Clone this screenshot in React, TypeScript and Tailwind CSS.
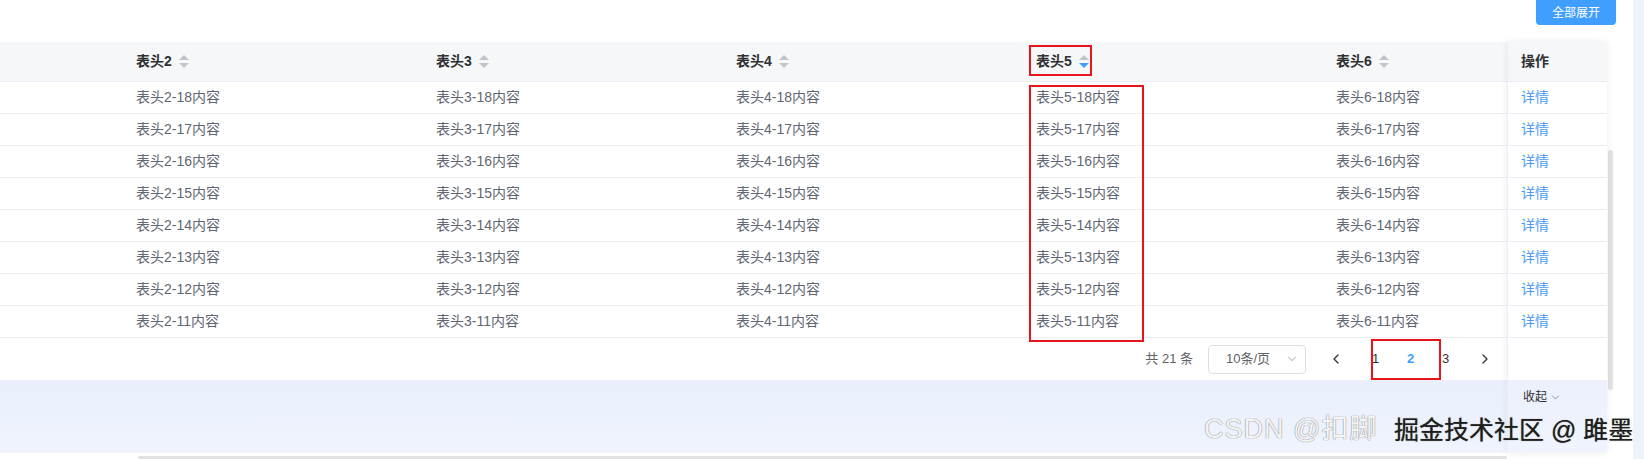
import React from 'react';

const columns = ['表头2', '表头3', '表头4', '表头5', '表头6'];
const rows = [18, 17, 16, 15, 14, 13, 12, 11];

function SortCaret({ active }: { active?: boolean }) {
  return (
    <span className="ml-[7px] inline-flex flex-col items-center gap-[3px]">
      <span className="h-0 w-0 border-x-[5px] border-b-[5px] border-x-transparent border-b-[#c0c4cc]" />
      <span
        className={`h-0 w-0 border-x-[5px] border-t-[5px] border-x-transparent ${
          active ? 'border-t-[#409eff]' : 'border-t-[#c0c4cc]'
        }`}
      />
    </span>
  );
}

function Chevron({ dir, className }: { dir: 'left' | 'right' | 'down'; className?: string }) {
  const d = dir === 'left' ? 'M7 2 L3 6 L7 10' : dir === 'right' ? 'M4 2 L8 6 L4 10' : 'M2 4 L6 8 L10 4';
  return (
    <svg viewBox="0 0 12 12" className={className} fill="none" stroke="currentColor" strokeWidth="1.3">
      <path d={d} strokeLinecap="round" strokeLinejoin="round" />
    </svg>
  );
}

export default function App() {
  return (
    <div className="relative flex h-[459px] w-[1644px] overflow-hidden bg-[#eef3fb] font-['Liberation_Sans','Noto_Sans_CJK_SC',sans-serif]">
      <div className="flex w-[1633px] flex-col bg-white">
        {/* top toolbar */}
        <div className="flex h-[42px] justify-end pr-[17px]">
          <button className="h-[25px] w-[80px] rounded-b-[4px] bg-[#409eff] text-[12px] text-white">全部展开</button>
        </div>

        {/* table body */}
        <div className="flex">
          <div className="flex w-[1507px] flex-col">
            <div className="grid h-[40px] grid-cols-[124px_300px_300px_300px_300px_183px] items-center border-b border-[#ebeef5] bg-[#f6f7f8]">
              <div />
              {columns.map((c) => (
                <div key={c} className="flex items-center px-3 text-[14px] font-bold text-[#303133]">
                  {c}
                  <SortCaret active={c === '表头5'} />
                </div>
              ))}
            </div>
            {rows.map((r) => (
              <div
                key={r}
                className="grid h-[32px] grid-cols-[124px_300px_300px_300px_300px_183px] items-center border-b border-[#ebeef5] text-[14px] text-[#5f6774]"
              >
                <div />
                {columns.map((c) => (
                  <div key={c} className="truncate px-3">
                    {c}-{r}内容
                  </div>
                ))}
              </div>
            ))}

            {/* pagination */}
            <div className="flex h-[42px] items-center justify-end pr-[6px] text-[13px] text-[#606266]">
              <span className="mr-[15px]">共 21 条</span>
              <div className="flex h-[29px] w-[98px] items-center justify-between rounded-[4px] border border-[#dcdfe6] pl-[17px] pr-[8px]">
                <span>10条/页</span>
                <Chevron dir="down" className="h-[10px] w-[10px] text-[#c0c4cc]" />
              </div>
              <button className="ml-[15px] flex h-[28px] w-[32px] items-center justify-center text-[#303133]">
                <Chevron dir="left" className="h-[12px] w-[12px]" />
              </button>
              <div className="ml-[5px] flex text-[13px]">
                <span className="flex h-[28px] w-[35px] items-center justify-center text-[#303133]">1</span>
                <span className="flex h-[28px] w-[35px] items-center justify-center font-bold text-[#409eff]">2</span>
                <span className="flex h-[28px] w-[35px] items-center justify-center text-[#303133]">3</span>
              </div>
              <button className="ml-[6px] flex h-[28px] w-[32px] items-center justify-center text-[#303133]">
                <Chevron dir="right" className="h-[12px] w-[12px]" />
              </button>
            </div>

            <div className="h-[73px] bg-gradient-to-b from-[#e9effc] to-[#eff4fd]" />
          </div>

          {/* fixed right column */}
          <div className="relative z-10 flex w-[100px] flex-col border-l border-[#ebeef5] bg-white shadow-[0_0_8px_rgba(0,0,0,0.07)]">
            <div className="flex h-[40px] items-center border-b border-[#ebeef5] bg-[#f6f7f8] pl-[13px] text-[14px] font-bold text-[#303133]">
              操作
            </div>
            {rows.map((r) => (
              <div key={r} className="flex h-[32px] items-center border-b border-[#ebeef5] pl-[13px] text-[14px] text-[#4f9bf3]">
                详情
              </div>
            ))}
            <div className="h-[42px]" />
            <div className="flex h-[73px] items-start bg-gradient-to-b from-[#ebf0fc] to-[#f0f4fd] pl-[15px] pt-[8px] text-[12px] text-[#303133]">
              <span className="flex items-center gap-[4px]">
                收起
                <Chevron dir="down" className="h-[9px] w-[9px] text-[#909399]" />
              </span>
            </div>
          </div>

          {/* vertical scrollbar */}
          <div className="w-[26px] bg-white">
            <div className="ml-[1px] mt-[108px] h-[240px] w-[5px] rounded-full bg-[#e3e3e3]" />
          </div>
        </div>

        {/* horizontal scrollbar */}
        <div className="h-[6px] bg-white pt-[3px]">
          <div className="ml-[138px] h-[3px] w-[1369px] rounded-full bg-[#e2e2e2]" />
        </div>
      </div>

      {/* red annotation boxes */}
      <div className="pointer-events-none absolute left-[1029px] top-[45px] z-20 h-[31px] w-[63px] border-2 border-[#e8141b]" />
      <div className="pointer-events-none absolute left-[1029px] top-[85px] z-20 h-[257px] w-[115px] border-2 border-[#e8141b]" />
      <div className="pointer-events-none absolute left-[1371px] top-[339px] z-20 h-[41px] w-[70px] border-2 border-[#e8141b]" />

      {/* watermarks */}
      <div className="pointer-events-none absolute left-[1204px] top-[416px] z-20 whitespace-nowrap text-[27px] leading-[27px] tracking-[1px] text-[#f4f4f4] [text-shadow:0_0_1px_#8a8a8a,0_0_1px_#8a8a8a]">
        CSDN @扣脚
      </div>
      <div className="pointer-events-none absolute left-[1394px] top-[418px] z-30 whitespace-nowrap text-[25px] leading-[25px] text-[#1e1e1e] [text-shadow:0_0_1px_#555,0_0_2px_#fff]">
        掘金技术社区 @ 雎墨
      </div>
    </div>
  );
}
